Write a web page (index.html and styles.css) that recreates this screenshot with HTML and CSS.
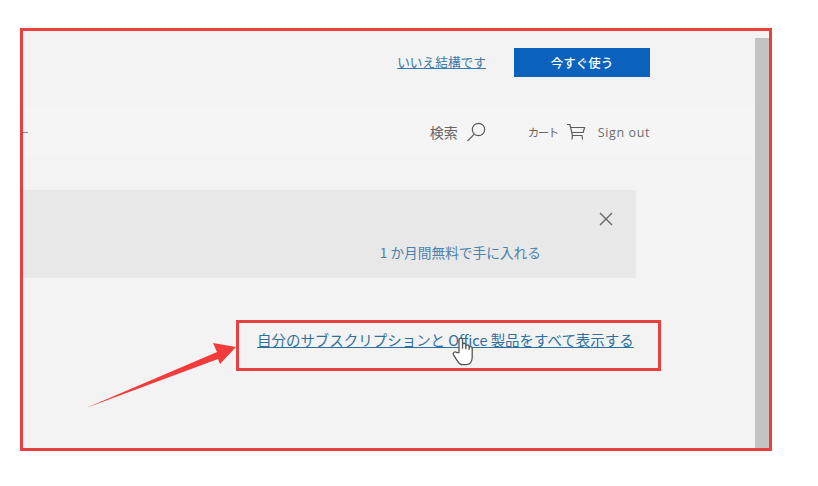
FILE: index.html
```html
<!DOCTYPE html>
<html lang="ja">
<head>
<meta charset="utf-8">
<title>Office</title>
<link rel="stylesheet" href="styles.css">
</head>
<body>
<div class="frame">
  <main class="page">
    <div class="offer">
      <a class="decline" href="#">いいえ結構です</a>
      <a class="cta" href="#">今すぐ使う</a>
    </div>
    <nav class="nav">
      <span class="dash"></span>
      <span class="nav-right">
        <span class="nav-item search">検索
          <svg class="ic-search" width="20" height="20" viewBox="0 0 20 20" fill="none" stroke="#5c5c5c" stroke-width="1.2"><circle cx="12.500" cy="7.500" r="6.200"/><path d="M8.300 12.200 1.500 19"/></svg>
        </span>
        <span class="nav-item cart"><span class="cart-label">カート</span>
          <svg class="ic-cart" width="20" height="18" viewBox="0 0 20 18" fill="none" stroke="#5c5c5c" stroke-width="1.2"><path d="M1 1.500h3l2.400 11h10"/><path d="M4.600 4.500H18.600l-1.400 5H5.700"/><path d="M6.400 12.500 6 16.500M16 12.500l.6 4"/></svg>
        </span>
        <span class="signout">Sign out</span>
      </span>
    </nav>
    <section class="banner">
      <svg class="close" width="14" height="14" viewBox="0 0 14 14" stroke="#666" stroke-width="1.400"><path d="M1 1l12 12M13 1 1 13"/></svg>
      <a class="trial" href="#">1 か月間無料で手に入れる</a>
    </section>
    <div class="manage">
      <a class="manage-link" href="#">自分のサブスクリプションと Office 製品をすべて表示する</a>
    </div>
  </main>
  <div class="scrollbar"></div>
</div>
<svg class="arrow" width="160" height="74" viewBox="0 0 160 74"><path fill="#f23b3b" d="M1 69 132 13 128 4 151 8 135 25 133 20Z"/></svg>
<svg class="hand" width="27" height="33" viewBox="0 0 24 30" fill="#fff" stroke="#555" stroke-width="1.200" stroke-linejoin="round"><path d="M7 16V4.500a1.600 1.600 0 0 1 3.200 0V12l0-3a1.500 1.500 0 0 1 3 0v3.500-2a1.500 1.500 0 0 1 3 0v2.500-1a1.400 1.400 0 0 1 2.800 0V20c0 4-2 7-5.500 7h-3c-2.500 0-3.800-1.500-5-3.500L2 18c-1-2 1.500-3.500 3-2Z"/></svg>
</body>
</html>
```

FILE: styles.css
```css
* { box-sizing: border-box; }
html, body { margin: 0; height: 100%; background: #fff; }
body {
  position: relative;
  padding: 28px 0 0 20px;
  font-family: "Noto Sans CJK JP", "Noto Sans", sans-serif;
  overflow: hidden;
}
a { color: #2f6f9f; }
.frame {
  display: flex;
  width: 752px;
  height: 423px;
  border: 3px solid #e8403f;
  background: #f3f3f3;
}
.page { flex: 1; min-width: 0; display: flex; flex-direction: column; padding-right: 105px; }
.scrollbar { width: 14px; margin-top: 7px; background: #c3c3c3; }
.offer {
  display: flex;
  justify-content: flex-end;
  align-items: center;
  gap: 28px;
  padding-top: 17px;
}
.decline { font-size: 12.700px; line-height: 27px; padding-bottom: 2px; color: #3a78a8; }
.cta {
  width: 136px;
  height: 29px;
  background: #0a62bd;
  color: #fff;
  font-size: 12.500px;
  font-weight: 500;
  line-height: 29px;
  text-align: center;
  text-decoration: none;
}
.nav {
  display: flex;
  justify-content: space-between;
  align-items: center;
  margin-right: -105px;
  padding-right: 105px;
  height: 66px;
  margin-top: 22px;
  background: linear-gradient(#f3f3f3, #f5f5f5 12px, #f5f5f5 54px, #f3f3f3);
}
.dash { width: 5px; height: 1px; background: #888; }
.nav-right { display: flex; align-items: center; color: #666; font-size: 14px; }
.nav-item { display: flex; align-items: center; }
.search { margin-right: 42px; }
.ic-search { margin-left: 8px; }
.cart { margin-right: 12px; }
.cart-label { font-size: 11.500px; letter-spacing: -1.500px; }
.ic-cart { margin-left: 8px; }
.signout { font-family: "Open Sans", "Noto Sans", sans-serif; font-size: 12.500px; letter-spacing: .6px; color: #6e6e6e; }
.banner {
  position: relative;
  width: 613px;
  height: 88px;
  margin-top: 25px;
  background: #e8e8e8;
  display: flex;
  flex-direction: column;
  align-items: flex-end;
  padding: 22px 23px 0 0;
}
.close { display: block; }
.trial {
  margin-top: 15px;
  margin-right: 72px;
  font-size: 13.700px;
  line-height: 22px;
  color: #4a82ad;
  text-decoration: none;
}
.manage {
  width: 425px;
  height: 51px;
  margin: 42px 0 0 213px;
  border: 3px solid #e8403f;
  padding: 4px 0 0 18px;
}
.manage-link { font-size: 14.480px; line-height: 26px; color: #2f6f9f; white-space: nowrap; }
.arrow { position: absolute; left: 85px; top: 339px; }
.hand { position: absolute; left: 451px; top: 335px; }
```
